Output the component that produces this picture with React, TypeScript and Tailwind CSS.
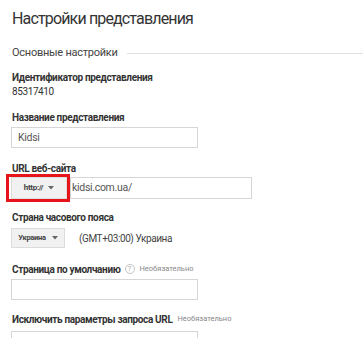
import React from "react";

const Label = ({ children, className = "" }: { children: React.ReactNode; className?: string }) => (
  <div className={`flex h-[14px] items-center text-[10px] font-bold tracking-[-0.35px] text-[#333] ${className}`}>
    {children}
  </div>
);

const Caret = ({ ml }: { ml: string }) => (
  <svg width="6" height="4" viewBox="0 0 6 4" className={ml}>
    <path d="M0 0 L6 0 L3 3.5 Z" fill="#666" />
  </svg>
);

const Optional = ({ className = "" }: { className?: string }) => (
  <span className={`text-[7.5px] font-normal tracking-normal text-[#888] ${className}`}>Необязательно</span>
);

export default function App() {
  return (
    <div
      className="relative h-[338px] w-[363px] overflow-hidden bg-white pl-[12px]"
      style={{ fontFamily: "Roboto, 'Noto Sans', sans-serif" }}
    >
      <div className="flex h-[38px] items-center text-[16px] tracking-[-0.85px] text-[#333]">
        Настройки представления
      </div>

      <div className="mt-[6px] flex h-[18px] items-center text-[11px] tracking-[-0.25px] text-[#444]">
        <span>Основные настройки</span>
        <div className="ml-[9px] h-px flex-1 bg-[#e0e0e0]" />
      </div>

      <Label className="mt-[8px]">Идентификатор представления</Label>
      <div className="flex h-[14px] items-center text-[10px] tracking-[-0.4px] text-[#333]">85317410</div>

      <Label className="mt-[12px]">Название представления</Label>
      <div className="mt-[3px] flex h-[21px] w-[187px] items-center border border-[#d6d6d6] pl-[6px] text-[10.5px] tracking-[-0.3px] text-[#555] -ml-px">
        Kidsi
      </div>

      <Label className="mt-[13px]">URL веб-сайта</Label>
      <div className="relative mt-[2px] flex h-[22px] items-center -ml-px">
        <div className="flex h-[22px] w-[56px] items-center justify-center border border-[#dcdcdc] bg-[#f1f1f1] text-[8px] font-bold tracking-[-0.3px] text-[#444]">
          http://
          <Caret ml="ml-[5px]" />
        </div>
        <div className="ml-[3px] flex h-[22px] w-[182px] items-center border border-[#d6d6d6] pl-[1px] text-[10.5px] tracking-[-0.3px] text-[#555]">
          kidsi.com.ua/
        </div>
        <div className="pointer-events-none absolute left-[-5px] top-[-3px] h-[28px] w-[64px] border-[3px] border-[#e8141b]" />
      </div>

      <Label className="mt-[11px]">Страна часового пояса</Label>
      <div className="mt-[4px] flex h-[20px] items-center -ml-px">
        <div className="flex h-[20px] w-[54px] items-center justify-center border border-[#dcdcdc] bg-[#f1f1f1] text-[7.5px] font-bold tracking-[-0.3px] text-[#444]">
          Украина
          <Caret ml="ml-[6px]" />
        </div>
        <span className="ml-[14px] text-[10px] tracking-[-0.4px] text-[#444]">(GMT+03:00) Украина</span>
      </div>

      <Label className="mt-[14px]">
        <span>Страница по умолчанию</span>
        <span className="ml-[4px] flex h-[10px] w-[10px] items-center justify-center rounded-full border border-[#c4c4c4] text-[7px] font-normal tracking-normal text-[#aaa]">
          ?
        </span>
        <Optional className="ml-[5px]" />
      </Label>
      <div className="mt-[3px] h-[21px] w-[187px] border border-[#d6d6d6] -ml-px" />

      <Label className="mt-[12px]">
        <span>Исключить параметры запроса URL</span>
        <Optional className="ml-[5px]" />
      </Label>
      <div className="mt-[5px] h-[21px] w-[187px] border border-[#d6d6d6] -ml-px" />
    </div>
  );
}
